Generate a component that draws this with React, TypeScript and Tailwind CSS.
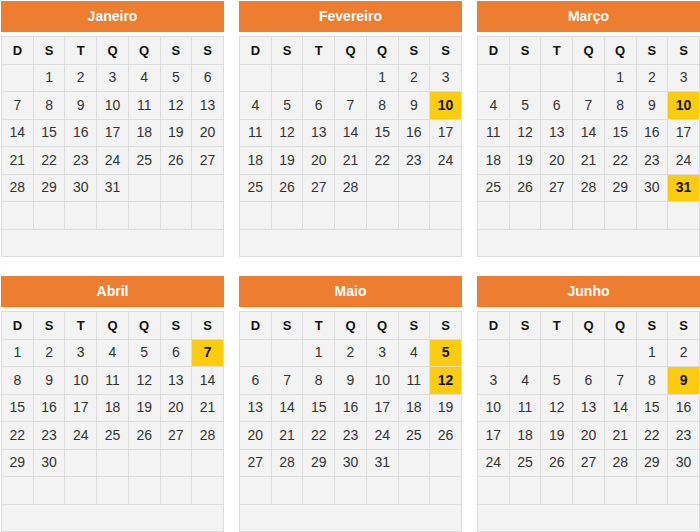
import React from "react";

type Month = { name: string; start: number; days: number; hl: number[] };

const months: Month[] = [
  { name: "Janeiro", start: 1, days: 31, hl: [] },
  { name: "Fevereiro", start: 4, days: 28, hl: [10] },
  { name: "Março", start: 4, days: 31, hl: [10, 31] },
  { name: "Abril", start: 0, days: 30, hl: [7] },
  { name: "Maio", start: 2, days: 31, hl: [5, 12] },
  { name: "Junho", start: 5, days: 30, hl: [9] },
];

const heads = ["D", "S", "T", "Q", "Q", "S", "S"];

function Cal({ m }: { m: Month }) {
  const cells: (number | null)[] = [];
  for (let i = 0; i < m.start; i++) cells.push(null);
  for (let d = 1; d <= m.days; d++) cells.push(d);
  while (cells.length < 42) cells.push(null);
  const weeks: (number | null)[][] = [];
  for (let i = 0; i < 6; i++) weeks.push(cells.slice(i * 7, i * 7 + 7));
  return (
    <div className="flex flex-col w-[223px]">
      <div className="h-[31px] bg-[#ed7d31] text-white font-bold text-[14px] flex items-center justify-center">
        {m.name}
      </div>
      <table className="mt-[4px] w-[223px] table-fixed border-collapse text-[14px]">
        <tbody>
          <tr className="h-[27.5px]">
            {heads.map((h, i) => (
              <td
                key={i}
                className="border border-[#dcdcdc] bg-[#f3f3f3] text-center font-bold text-[13px] text-[#111] p-0"
              >
                {h}
              </td>
            ))}
          </tr>
          {weeks.map((w, wi) => (
            <tr key={wi} className="h-[27.5px]">
              {w.map((d, di) => {
                const hl = d !== null && m.hl.includes(d);
                return (
                  <td
                    key={di}
                    className={
                      hl
                        ? "border border-[#dcdcdc] bg-[#fdcc10] text-center font-bold text-[#111] p-0"
                        : "border border-[#dcdcdc] bg-[#f3f3f3] text-center text-[#333] p-0"
                    }
                  >
                    {d ?? ""}
                  </td>
                );
              })}
            </tr>
          ))}
          <tr className="h-[27.5px]">
            <td colSpan={7} className="border border-[#dcdcdc] bg-[#f3f3f3] p-0"></td>
          </tr>
        </tbody>
      </table>
    </div>
  );
}

export default function App() {
  return (
    <div
      className="w-[700px] h-[532px] bg-white pl-[1px] pt-[1px] grid grid-cols-[223px_223px_223px] gap-x-[15px] gap-y-[19px] content-start"
      style={{ fontFamily: '"Liberation Sans", Arial, sans-serif' }}
    >
      {months.map((m) => (
        <Cal key={m.name} m={m} />
      ))}
    </div>
  );
}
